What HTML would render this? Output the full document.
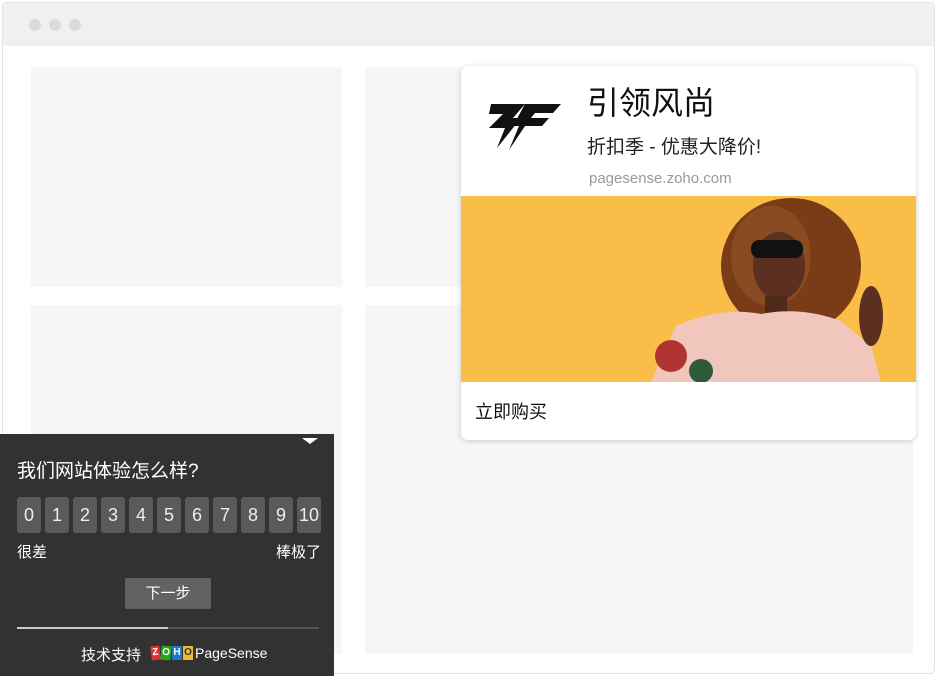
<!DOCTYPE html>
<html><head><meta charset="utf-8"><style>
*{margin:0;padding:0;box-sizing:border-box}
body{width:936px;height:676px;background:#fff;position:relative;overflow:hidden;font-family:"Liberation Sans","Noto Sans CJK SC",sans-serif}
.frame{position:absolute;left:2px;top:2px;width:933px;height:672px;border:1px solid #e3e3e3;border-radius:4px;background:#fff}
.bar{position:absolute;left:3px;top:3px;width:931px;height:43px;background:#f0f0f0}
.dot{position:absolute;top:19px;width:12px;height:12px;border-radius:50%;background:#dcdcdc}
.ph{position:absolute;background:#f6f6f6}
.card{position:absolute;left:461px;top:66px;width:455px;height:374px;background:#fff;border-radius:7px;box-shadow:0 1px 6px rgba(0,0,0,.18);overflow:hidden}
.sv{position:absolute;left:0;top:434px;width:334px;height:242px;background:#323232;color:#fff}
.n{position:absolute;top:63px;width:24px;height:36px;background:#5a5a5a;border-radius:3px;color:#eee;font-size:18px;text-align:center;line-height:36px}
</style></head><body>
<div class="frame"></div>
<div class="bar"></div>
<div class="dot" style="left:29px"></div><div class="dot" style="left:49px"></div><div class="dot" style="left:69px"></div>
<div class="ph" style="left:31px;top:67px;width:311px;height:220px"></div>
<div class="ph" style="left:365px;top:67px;width:120px;height:220px"></div>
<div class="ph" style="left:31px;top:305px;width:311px;height:349px"></div>
<div class="ph" style="left:365px;top:305px;width:548px;height:349px"></div>
<div class="card">
 <svg style="position:absolute;left:26px;top:30px" width="76" height="58" viewBox="0 0 76 58">
  <path d="M4 8 H38 L26 22 H34 L10 52 L18 32 H2 L16 18 H2 Z" fill="#111"/>
  <path d="M38 8 H74 L66 17 H48 L44 22 H62 L55 30 H38 L22 54 L32 30 H26 Z" fill="#111"/>
 </svg>
 <div style="position:absolute;left:126px;top:12px;font-size:32px;color:#111">引领风尚</div>
 <div style="position:absolute;left:126px;top:66px;font-size:19px;color:#222">折扣季 - 优惠大降价!</div>
 <div style="position:absolute;left:128px;top:104px;font-size:15px;color:#999">pagesense.zoho.com</div>
 <div style="position:absolute;left:0;top:130px;width:455px;height:186px;background:#f9bd48;overflow:hidden">
  <svg width="455" height="186" viewBox="0 0 455 186">
   <ellipse cx="330" cy="70" rx="70" ry="68" fill="#7a3b17"/>
   <ellipse cx="310" cy="60" rx="40" ry="50" fill="#8a4a22"/>
   <ellipse cx="318" cy="70" rx="26" ry="34" fill="#5b3020"/>
   <rect x="290" y="44" width="52" height="18" rx="8" fill="#111"/>
   <rect x="304" y="100" width="22" height="30" fill="#4e2a1b"/>
   <path d="M190 186 L215 130 Q260 110 300 118 Q340 110 380 125 L410 150 L420 186 Z" fill="#f1c6bd"/>
   <circle cx="210" cy="160" r="16" fill="#b03530"/><circle cx="240" cy="175" r="12" fill="#2f5a3a"/>
   <ellipse cx="410" cy="120" rx="12" ry="30" fill="#5b3020"/>
  </svg>
 </div>
 <div style="position:absolute;left:14px;top:332px;font-size:18px;color:#111">立即购买</div>
</div>
<div class="sv">
 <div style="position:absolute;right:16px;top:4px;width:0;height:0;border-left:8px solid transparent;border-right:8px solid transparent;border-top:6px solid #fff"></div>
 <div style="position:absolute;left:17px;top:22px;font-size:19px">我们网站体验怎么样?</div>
 <div class="n" style="left:17px">0</div><div class="n" style="left:45px">1</div><div class="n" style="left:73px">2</div><div class="n" style="left:101px">3</div><div class="n" style="left:129px">4</div><div class="n" style="left:157px">5</div><div class="n" style="left:185px">6</div><div class="n" style="left:213px">7</div><div class="n" style="left:241px">8</div><div class="n" style="left:269px">9</div><div class="n" style="left:297px">10</div>
 <div style="position:absolute;left:17px;top:107px;font-size:15px">很差</div>
 <div style="position:absolute;right:13px;top:107px;font-size:15px">棒极了</div>
 <div style="position:absolute;left:125px;top:144px;width:86px;height:31px;background:#626262;border-radius:2px;text-align:center;line-height:31px;font-size:15px">下一步</div>
 <div style="position:absolute;left:17px;top:193px;width:302px;height:2px;background:#555"></div>
 <div style="position:absolute;left:17px;top:193px;width:151px;height:2px;background:#ccc"></div>
 <div style="position:absolute;left:81px;top:210px;font-size:15px">技术支持</div>
 <div style="position:absolute;left:151px;top:212px;display:flex;gap:1px;font-size:10px;font-weight:bold;line-height:14px;text-align:center">
  <span style="width:9px;background:#d33;transform:rotate(-6deg)">Z</span><span style="width:10px;background:#2a2;transform:rotate(6deg)">O</span><span style="width:10px;background:#27c">H</span><span style="width:10px;background:#eb3;color:#333">O</span>
 </div>
 <div style="position:absolute;left:195px;top:211px;font-size:14px">PageSense</div>
</div>
</body></html>
